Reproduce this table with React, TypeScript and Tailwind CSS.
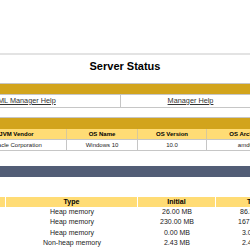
const memoryRows = [
  { type: 'Heap memory', initial: '26.00 MB', total: '86.50 MB' },
  { type: 'Heap memory', initial: '230.00 MB', total: '167.50 MB' },
  { type: 'Heap memory', initial: '0.00 MB', total: '3.00 MB' },
  { type: 'Non-heap memory', initial: '2.43 MB', total: '2.43 MB' },
];

export default function App() {
  return (
    <div className="h-[250px] w-[250px] overflow-hidden bg-white text-black font-['Liberation_Sans',Arial,sans-serif]">
      {/* page header, logos are scrolled out of view */}
      <div className="h-[53px]" />
      <div className="h-[2px] bg-[#e3e3e3]" />

      <h1 className="mt-[5px] mb-[10px] h-[13px] text-center text-[11px] font-bold leading-[13px]">Server Status</h1>

      {/* Manager links */}
      <div className="border-y border-[#c6c6c6]">
        <div className="h-[10px] bg-[#d2a41c]" />
        <div className="-ml-[76px] flex h-[13px] border-t border-[#c6c6c6] text-[7.3px] text-[#333]">
          <div className="flex w-[197px] shrink-0 items-center justify-center border-r border-[#c6c6c6]">
            <a className="underline">HTML Manager Help</a>
          </div>
          <div className="flex w-[140px] shrink-0 items-center justify-center border-r border-[#c6c6c6]">
            <a className="underline">Manager Help</a>
          </div>
        </div>
      </div>

      {/* Server information */}
      <div className="mt-[9px] border-y border-[#c6c6c6]">
        <div className="h-[11px] bg-[#d2a41c]" />
        <div className="-ml-[33px] flex h-[10px] bg-[#ffdc75] text-[6px] font-bold leading-[10px]">
          <div className="w-[100px] shrink-0 border-r border-[#d8c89a] text-center">JVM Vendor</div>
          <div className="w-[71px] shrink-0 border-r border-[#d8c89a] text-center">OS Name</div>
          <div className="w-[69px] shrink-0 border-r border-[#d8c89a] text-center">OS Version</div>
          <div className="w-[90px] shrink-0 text-center">OS Architecture</div>
        </div>
        <div className="-ml-[33px] flex h-[11px] border-t border-[#c6c6c6] text-[6px] leading-[10px] text-[#222]">
          <div className="w-[100px] shrink-0 border-r border-[#c6c6c6] text-center">Oracle Corporation</div>
          <div className="w-[71px] shrink-0 border-r border-[#c6c6c6] text-center">Windows 10</div>
          <div className="w-[69px] shrink-0 border-r border-[#c6c6c6] text-center">10.0</div>
          <div className="w-[80px] shrink-0 text-center">amd64</div>
        </div>
      </div>

      {/* JVM section */}
      <div className="mt-[15px] h-[11px] bg-[#525d76]" />

      <div className="mt-[20px] -ml-[2px] flex h-[10px] bg-[#ffdc75] text-[7px] font-bold leading-[10px]">
        <div className="w-[8px] shrink-0 border-r border-white" />
        <div className="w-[132px] shrink-0 border-r border-white text-center">Type</div>
        <div className="w-[78px] shrink-0 border-r border-white text-center">Initial</div>
        <div className="w-[78px] shrink-0 text-center">Total</div>
      </div>
      {memoryRows.map((row, i) => (
        <div key={i} className="-ml-[2px] flex h-[10.4px] text-[7px] leading-[10.4px] text-[#222]">
          <div className="w-[8px] shrink-0" />
          <div className="w-[132px] shrink-0 text-center">{row.type}</div>
          <div className="w-[78px] shrink-0 text-center">{row.initial}</div>
          <div className="w-[78px] shrink-0 text-center">{row.total}</div>
        </div>
      ))}
    </div>
  );
}
